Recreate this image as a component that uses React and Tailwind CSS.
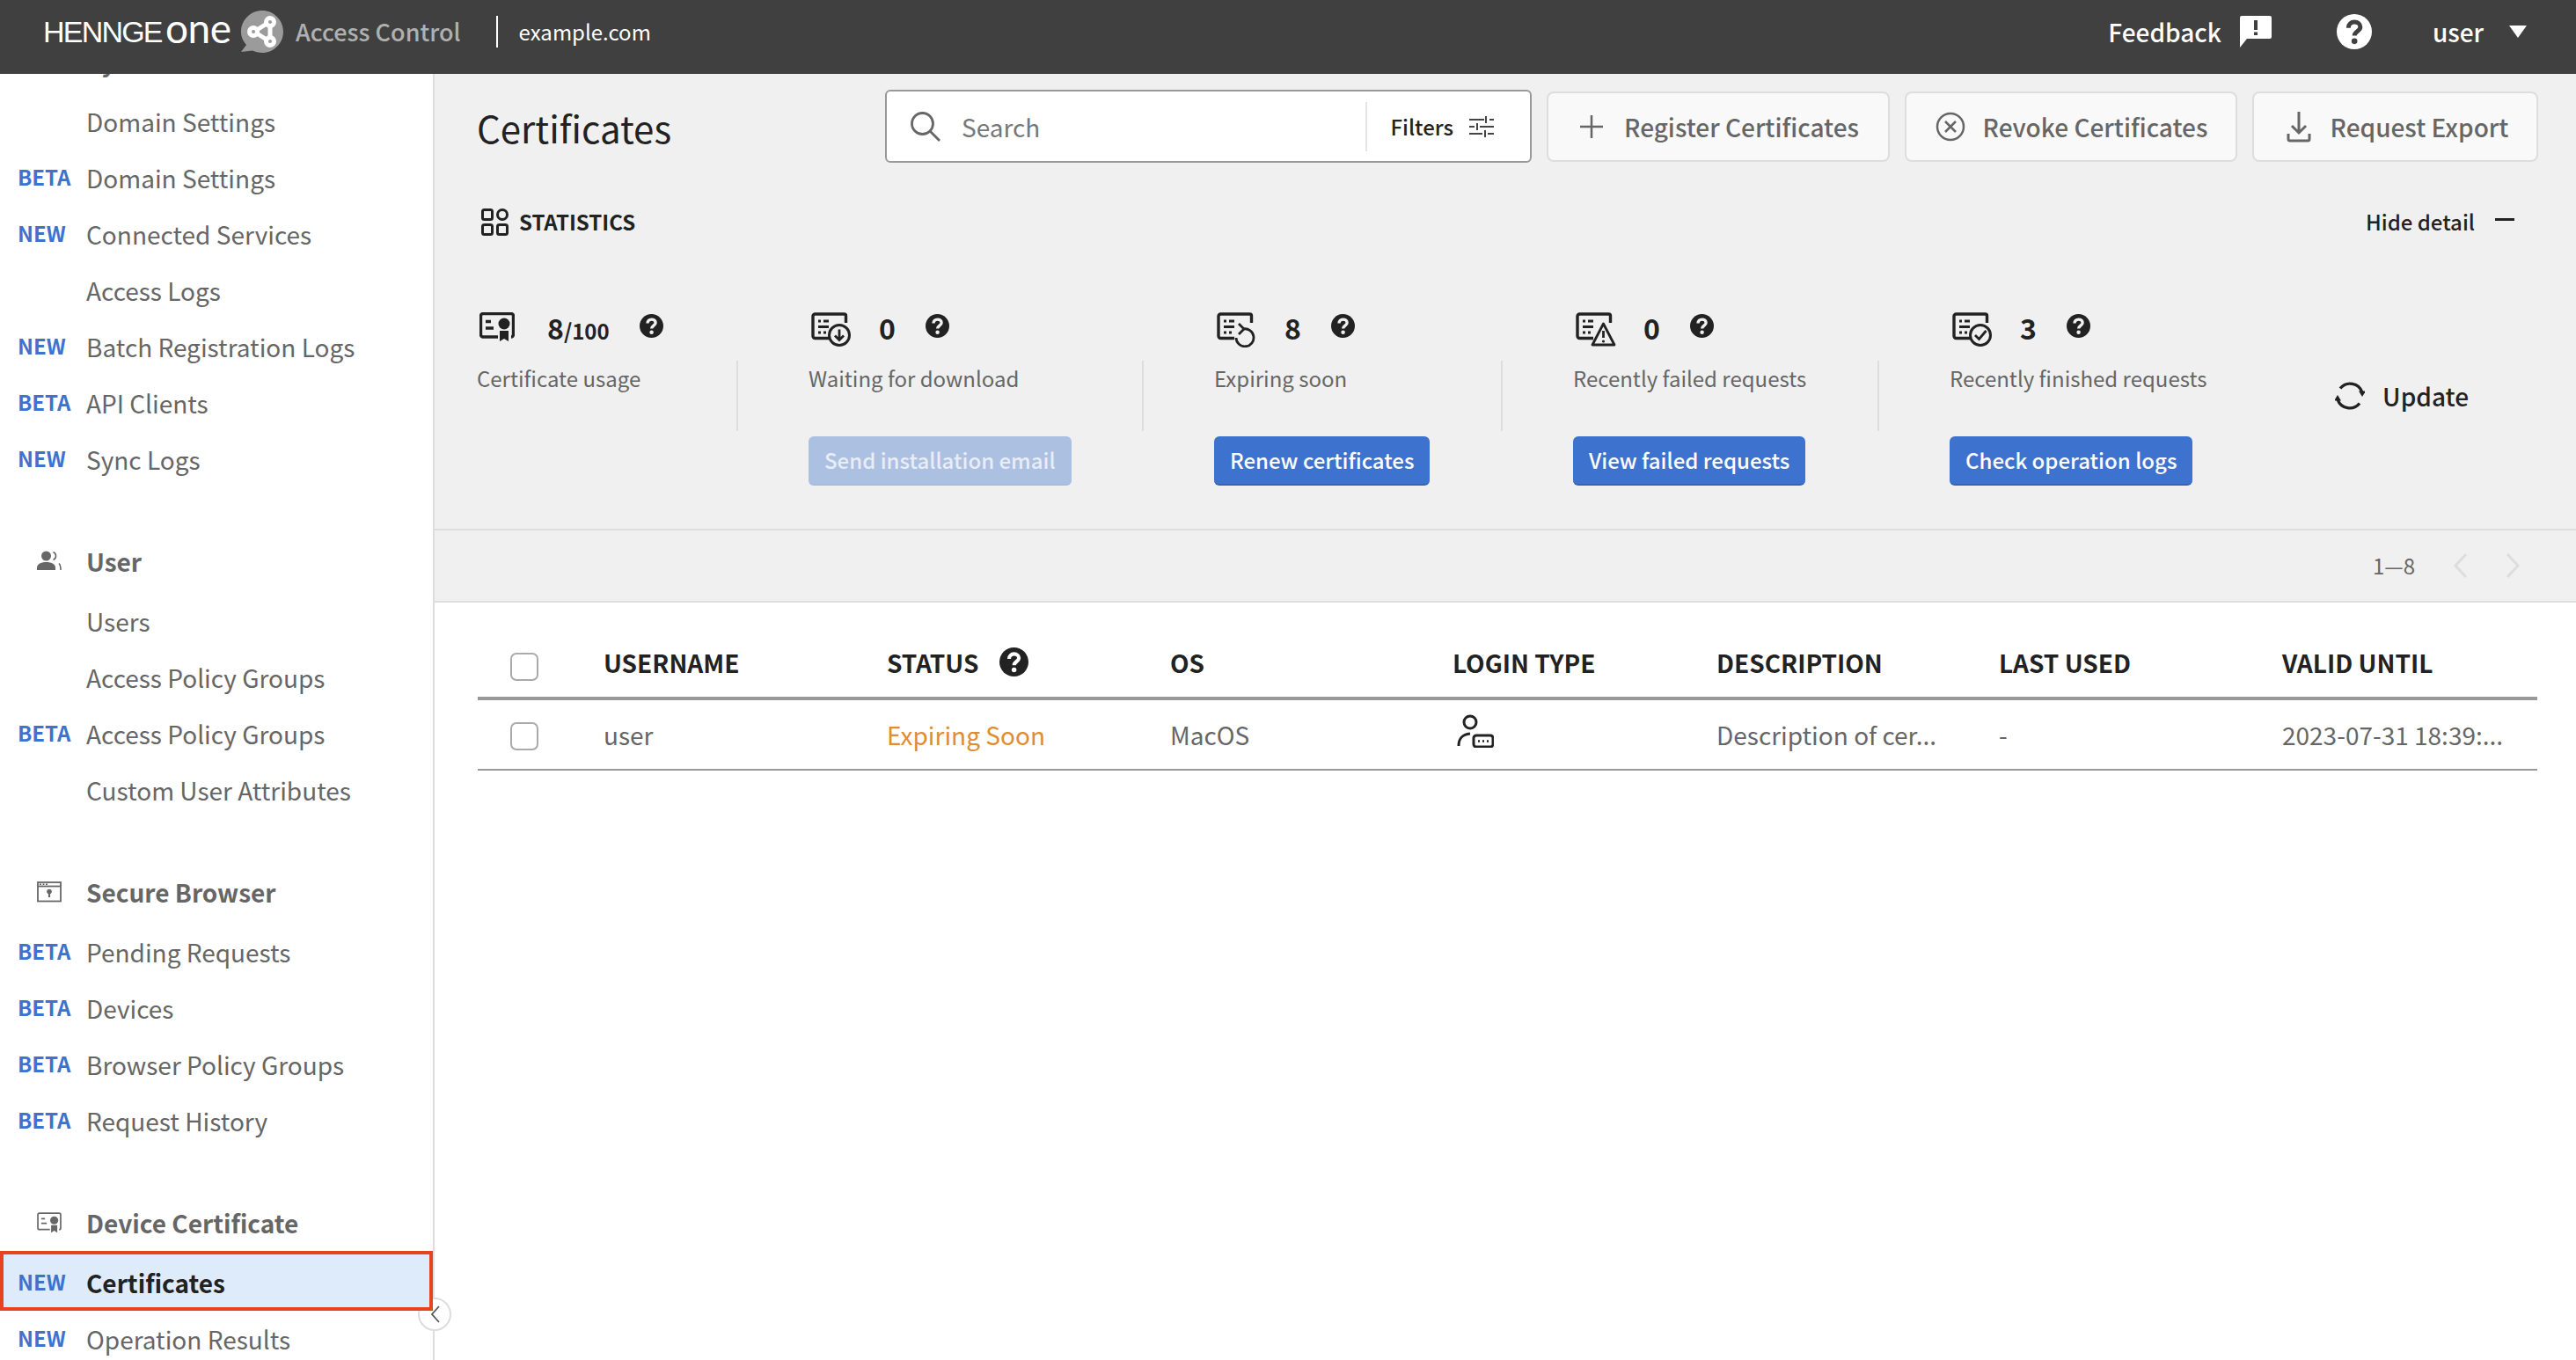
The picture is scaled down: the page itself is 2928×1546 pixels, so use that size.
import React from "react";

const Help = ({ size = 27, color = "#222", q = "#f0f0f0" }) => (
  <svg width={size} height={size} viewBox="0 0 24 24" className="shrink-0">
    <circle cx="12" cy="12" r="12" fill={color} />
    <path d="M8 9.400C8 6.900 9.800 5.400 12.100 5.400c2.300 0 4 1.400 4 3.400 0 2.800-4 2.900-4 5.900" fill="none" stroke={q} strokeWidth="3" />
    <circle cx="12.100" cy="18.500" r="2" fill={q} />
  </svg>
);

const CertBase = ({ children }) => (
  <svg width="46" height="40" viewBox="0 0 46 40" fill="none" stroke="#222" strokeWidth="3.400" className="shrink-0">
    <path d="M20 29.500H4.500A2.500 2.500 0 0 1 2 27V4.500A2.500 2.500 0 0 1 4.500 2h33A2 2 0 0 1 39.500 4v8" />
    <path d="M8 10h3M14 10h6M8 16.500h12M8 23h3M14 23h3" strokeWidth="3" />
    {children}
  </svg>
);

const CertDown = () => (
  <CertBase>
    <circle cx="32" cy="26" r="11.500" fill="#f0f0f0" strokeWidth="3" />
    <path d="M32 19.500v12M27 26.500l5 5 5-5" strokeWidth="2.800" />
  </CertBase>
);
const CertRenew = () => (
  <CertBase>
    <path d="M24 16h16v22H24z" fill="#f0f0f0" stroke="none" />
    <path d="M30 19a10 10 0 1 1-8 10" strokeWidth="2.800" />
    <path d="M25 13l6 6-6 6" strokeWidth="2.800" />
  </CertBase>
);
const CertWarn = () => (
  <CertBase>
    <path d="M31.500 13 44 37H19z" fill="#f0f0f0" strokeWidth="2.800" strokeLinejoin="round" />
    <path d="M31.500 21v8" strokeWidth="2.800" />
    <circle cx="31.500" cy="33" r="1.600" fill="#222" stroke="none" />
  </CertBase>
);
const CertCheck = () => (
  <CertBase>
    <circle cx="32" cy="26" r="11.500" fill="#f0f0f0" strokeWidth="3" />
    <path d="M26 26l4.500 4.500L38.500 21" strokeWidth="2.800" />
  </CertBase>
);
const CertBadge = ({ color = "#222", w = 40, h = 34, sw = 3.400 }) => (
  <svg width={w} height={h} viewBox="0 0 40 34" fill="none" stroke={color} strokeWidth={sw} className="shrink-0">
    <path d="M21 28H4a2.500 2.500 0 0 1-2.500-2.500V4A2.500 2.500 0 0 1 4 1.500h32A2.500 2.500 0 0 1 38.500 4v21.500A2.500 2.500 0 0 1 36 28" />
    <path d="M7 10.500h6M7 18h9" />
    <circle cx="28" cy="13" r="6.500" fill={color} stroke="none" />
    <path d="M23 21h10v12l-5-3-5 3z" fill={color} stroke="none" />
  </svg>
);

const badgeClass = "pl-[20px] shrink-0 text-[24px] leading-[32px] font-bold text-[#3d72ce] -translate-y-[1px]";

const NavItem = ({ label, tag }) => (
  <div className="h-[64px] flex items-center">
    {tag ? <span className={`w-[98px] ${badgeClass}`}>{tag}</span> : <span className="w-[98px] shrink-0" />}
    <span className="text-[28px] leading-[40px] text-[#666]">{label}</span>
  </div>
);

const ActiveNavItem = ({ label, tag }) => (
  <div className="relative z-20 h-[68px] -mt-[4px] pt-[4px] flex items-center bg-[#deebfb] border-[4px] border-[#e8431f]">
    <span className={`w-[94px] -ml-[4px] mr-[4px] ${badgeClass}`}>{tag}</span>
    <span className="text-[28px] leading-[40px] font-bold text-[#222]">{label}</span>
  </div>
);

const NavHead = ({ icon, label, first }) => (
  <div className={`h-[72px] flex items-center ${first ? "" : "mt-[48px]"}`}>
    <span className="w-[98px] pl-[42px] shrink-0 flex items-center">{icon}</span>
    <span className="text-[28px] leading-[40px] font-bold text-[#666]">{label}</span>
  </div>
);

const UserIcon = () => (
  <svg width="28" height="24" viewBox="0 0 28 24" fill="none" className="shrink-0">
    <circle cx="10.500" cy="6" r="5.500" fill="#666" />
    <path d="M0 22v-2.500c0-4 4-6.500 10.500-6.500S21 15.500 21 19.500V22z" fill="#666" />
    <path d="M18.500 1.500c2.200 1 3 3 3 4.500s-.8 3.500-3 4.500M25 14.500c1.500 1.500 2 4 2 7.500" stroke="#666" strokeWidth="1.600" />
  </svg>
);
const BrowserIcon = () => (
  <svg width="28" height="24" viewBox="0 0 28 24" fill="none" className="shrink-0">
    <rect x="1" y="1" width="26" height="21.500" fill="#fff" stroke="#666" strokeWidth="1.800" />
    <path d="M1 5.500h26" stroke="#666" strokeWidth="1.800" />
    <path d="M3 3.200h2M6.500 3.200h2M10 3.200h2" stroke="#666" strokeWidth="1.500" />
    <circle cx="14" cy="11.500" r="2.800" fill="#666" />
    <path d="M14 12v6" stroke="#666" strokeWidth="2.200" />
  </svg>
);

const OutlineButton = ({ icon, label, width, gap }) => (
  <button className={`${width} ${gap} h-[80px] shrink-0 bg-[#f9f9f9] border-2 border-[#ddd] rounded-[8px] flex items-center justify-center text-[28px] leading-[40px] text-[#666] font-medium`}>
    {icon}
    <span>{label}</span>
  </button>
);

const StatCol = ({ width, first, icon, value, sub, label, action, disabled, divider = true }) => (
  <div className={`${width} shrink-0 flex flex-col`}>
    <div className={`h-[54px] flex items-start ${first ? "" : "pl-[80px]"}`}>
      <span className="w-[80px] pl-[3px] shrink-0 -translate-y-[1px]">{icon}</span>
      <span className="text-[32px] leading-[40px] font-bold text-[#222] mr-[34px] -translate-y-[4px]">
        {value}
        {sub && <span className="text-[24px] font-bold">{sub}</span>}
      </span>
      <span className="mt-[1px]"><Help /></span>
    </div>
    <div className={`h-[80px] ${first ? "" : "pl-[80px]"} ${divider ? "border-r-2 border-[#ddd]" : ""}`}>
      <p className="text-[24px] leading-[40px] text-[#666] whitespace-nowrap">{label}</p>
    </div>
    {action && (
      <div className={`mt-[6px] ${first ? "" : "pl-[80px]"}`}>
        <button className={`h-[56px] px-[18px] rounded-[6px] text-[24px] leading-[34px] font-medium border-b-2 whitespace-nowrap ${disabled ? "bg-[#acc0e2] border-[#a5bbdf] text-[#e8edf6]" : "bg-[#3d72ce] border-[#3663b4] text-white"}`}>{action}</button>
      </div>
    )}
  </div>
);

const cols = ["USERNAME", "STATUS", "OS", "LOGIN TYPE", "DESCRIPTION", "LAST USED", "VALID UNTIL"];
const gridCols = "grid grid-cols-[143px_322px_322px_321px_300px_321px_322px_1fr]";

const Checkbox = () => <span className="block w-[32px] h-[32px] ml-[37px] mt-[4px] rounded-[7px] border-2 border-[#aaa] bg-white" />;

export default function App() {
  return (
    <div className="h-screen w-full overflow-hidden flex flex-col bg-white font-['Noto_Sans_CJK_JP','Noto_Sans',sans-serif]">
      {/* Header */}
      <header className="h-[84px] shrink-0 bg-[#404040] flex items-center pl-[49px] pr-[56px] pb-[12px] text-white">
        <span className="font-['Liberation_Sans',sans-serif] text-[34px] leading-[40px] tracking-[-1.800px] w-[139px] whitespace-nowrap">HENNGE</span>
        <span className="font-['Lato',sans-serif] text-[46px] leading-[40px] tracking-[-0.500px] w-[86px] -translate-y-[4px]">one</span>
        <svg width="48" height="48" viewBox="0 0 48 48" className="shrink-0">
          <path d="M24 0C37 0 48 10.500 48 24S37 48 24 48c-4 0-8-1-11-2.500L0 47l6-8C2 34 0 30 0 24 0 10.500 11 0 24 0z" fill="#9b9b9b" />
          <g fill="none" stroke="#fff" strokeWidth="5">
            <circle cx="33" cy="13" r="4.500" />
            <circle cx="14" cy="24" r="4.500" />
            <circle cx="33" cy="35" r="4.500" />
            <path d="M18 22l11-7M18 26l11 7M33 18v12" />
          </g>
        </svg>
        <span className="ml-[14px] text-[27px] leading-[36px] font-medium text-[#b0b0b0] whitespace-nowrap">Access Control</span>
        <span className="ml-[40px] w-[2px] h-[36px] bg-white" />
        <span className="ml-[24px] text-[24px] leading-[36px] whitespace-nowrap">example.com</span>
        <span className="ml-auto text-[28px] leading-[40px] font-medium">Feedback</span>
        <svg width="36" height="36" viewBox="0 0 36 36" className="ml-[21px] shrink-0">
          <path d="M2 0h32a2 2 0 0 1 2 2v22a2 2 0 0 1-2 2H8l-8 10V2a2 2 0 0 1 2-2z" fill="#fff" />
          <path d="M16 5h4v11h-4zM16 18.500h4V22h-4z" fill="#404040" />
        </svg>
        <span className="ml-[74px]"><Help size={40} color="#fff" q="#404040" /></span>
        <span className="ml-[69px] text-[28px] leading-[40px] font-medium">user</span>
        <svg width="20" height="14" viewBox="0 0 20 14" className="ml-[29px]">
          <path d="M0 0h20L10 14z" fill="#fff" />
        </svg>
      </header>

      <div className="relative flex-1 flex min-h-0">
        {/* Sidebar */}
        <aside className="w-[494px] shrink-0 border-r-2 border-[#ddd] overflow-hidden bg-white">
          <nav className="-mt-[50px]">
            <NavHead first label="System" />
            <NavItem label="Domain Settings" />
            <NavItem tag="BETA" label="Domain Settings" />
            <NavItem tag="NEW" label="Connected Services" />
            <NavItem label="Access Logs" />
            <NavItem tag="NEW" label="Batch Registration Logs" />
            <NavItem tag="BETA" label="API Clients" />
            <NavItem tag="NEW" label="Sync Logs" />
            <NavHead icon={<UserIcon />} label="User" />
            <NavItem label="Users" />
            <NavItem label="Access Policy Groups" />
            <NavItem tag="BETA" label="Access Policy Groups" />
            <NavItem label="Custom User Attributes" />
            <NavHead icon={<BrowserIcon />} label="Secure Browser" />
            <NavItem tag="BETA" label="Pending Requests" />
            <NavItem tag="BETA" label="Devices" />
            <NavItem tag="BETA" label="Browser Policy Groups" />
            <NavItem tag="BETA" label="Request History" />
            <NavHead icon={<CertBadge color="#666" w={28} h={24} sw={2.400} />} label="Device Certificate" />
            <ActiveNavItem tag="NEW" label="Certificates" />
            <NavItem tag="NEW" label="Operation Results" />
          </nav>
        </aside>

        {/* Collapse handle */}
        <button className="absolute left-[475px] top-[1391px] w-[38px] h-[38px] rounded-full bg-white border-2 border-[#ddd] flex items-center justify-center z-10">
          <svg width="11" height="20" viewBox="0 0 11 20" fill="none" stroke="#555" strokeWidth="1.800"><path d="M10 1 2 10l8 9" /></svg>
        </button>

        {/* Main */}
        <main className="flex-1 min-w-0 flex flex-col">
          <section className="h-[519px] shrink-0 bg-[#f0f0f0] border-b-2 border-[#ddd] pl-[48px] pr-[43px] pt-[18px]">
            {/* Toolbar */}
            <div className="flex items-center h-[83px]">
              <h1 className="text-[42px] leading-[60px] font-normal text-[#222] mt-[2px]">Certificates</h1>
              <div className="ml-auto w-[735px] h-[83px] bg-white border-2 border-[#999] rounded-[6px] flex items-center shrink-0 mr-[17px]">
                <svg width="36" height="36" viewBox="0 0 36 36" fill="none" stroke="#666" strokeWidth="2.800" className="ml-[26px] shrink-0">
                  <circle cx="14.500" cy="14.500" r="12" />
                  <path d="M23 23l11 11" />
                </svg>
                <span className="ml-[23px] text-[28px] leading-[40px] text-[#777]">Search</span>
                <span className="ml-auto w-[2px] h-[56px] bg-[#e5e5e5]" />
                <span className="ml-[26px] text-[24px] leading-[34px] font-medium text-[#222]">Filters</span>
                <svg width="28" height="24" viewBox="0 0 28 24" fill="none" stroke="#444" strokeWidth="2" className="ml-[18px] mr-[41px] shrink-0">
                  <path d="M0 4h17M23 4h5M0 12h6M12 12h16M0 20h15M21 20h7M19 0v8M9 8v8M18 16v8" />
                </svg>
              </div>
              <div className="flex items-center gap-[17px]">
                <OutlineButton
                  width="w-[390px] pl-[3px]"
                  gap="gap-[24px]"
                  label="Register Certificates"
                  icon={<svg width="26" height="26" viewBox="0 0 26 26" fill="none" stroke="#666" strokeWidth="2.500"><path d="M13 0v26M0 13h26" /></svg>}
                />
                <OutlineButton
                  width="w-[378px] pl-[1px]"
                  gap="gap-[20px]"
                  label="Revoke Certificates"
                  icon={<svg width="34" height="34" viewBox="0 0 34 34" fill="none" stroke="#666" strokeWidth="2.500"><circle cx="17" cy="17" r="15" /><path d="M11 11l12 12M23 11 11 23" /></svg>}
                />
                <OutlineButton
                  width="w-[325px] pl-[5px]"
                  gap="gap-[22px]"
                  label="Request Export"
                  icon={<svg width="28" height="36" viewBox="0 0 28 36" fill="none" stroke="#666" strokeWidth="3"><path d="M14 1v24M6 17l8 8 8-8M2 26v6a2 2 0 0 0 2 2h20a2 2 0 0 0 2-2v-6" /></svg>}
                />
              </div>
            </div>

            {/* Statistics heading */}
            <div className="mt-[52px] h-[30px] flex items-center pl-[5px] pr-[27px]">
              <svg width="31" height="31" viewBox="0 0 31 31" fill="none" stroke="#222" strokeWidth="3" className="shrink-0">
                <rect x="1.500" y="1.500" width="11" height="11" rx="2" />
                <circle cx="24" cy="7" r="5.500" />
                <rect x="1.500" y="18.500" width="11" height="11" rx="2" />
                <rect x="18.500" y="18.500" width="11" height="11" rx="2" />
              </svg>
              <span className="ml-[12px] text-[24px] leading-[34px] font-bold text-[#222]">STATISTICS</span>
              <span className="ml-auto text-[24px] leading-[34px] font-medium text-[#222]">Hide detail</span>
              <span className="ml-[23px] w-[22px] h-[3px] bg-[#222] -translate-y-[3px]" />
            </div>

            {/* Stats */}
            <div className="mt-[89px] flex">
              <StatCol first width="w-[297px]" icon={<CertBadge />} value="8" sub="/100" label="Certificate usage" />
              <StatCol width="w-[461px]" icon={<CertDown />} value="0" label="Waiting for download" action="Send installation email" disabled />
              <StatCol width="w-[408px]" icon={<CertRenew />} value="8" label="Expiring soon" action="Renew certificates" />
              <StatCol width="w-[428px]" icon={<CertWarn />} value="0" label="Recently failed requests" action="View failed requests" />
              <StatCol width="w-[400px]" icon={<CertCheck />} value="3" label="Recently finished requests" action="Check operation logs" divider={false} />
              <div className="ml-auto mr-[79px] self-start mt-[76px] h-[36px] flex items-center gap-[20px]">
                <svg width="34" height="34" viewBox="0 0 34 34" fill="none" stroke="#222" strokeWidth="3.400" className="shrink-0">
                  <path d="M6 8.500A14.500 14.500 0 0 1 31 13M28 25.500A14.500 14.500 0 0 1 3 21" />
                  <path d="M27 11.500h8l-4 6.500z" fill="#222" stroke="none" />
                  <path d="M-1 22.500h8l-4-6.500z" fill="#222" stroke="none" />
                </svg>
                <span className="text-[28px] leading-[40px] font-medium text-[#222]">Update</span>
              </div>
            </div>
          </section>

          {/* Pagination */}
          <div className="h-[82px] shrink-0 bg-[#f0f0f0] border-b-2 border-[#ddd] flex items-center justify-end pr-[63px]">
            <span className="text-[24px] leading-[34px] text-[#666] mr-[43px]">1—8</span>
            <svg width="17" height="28" viewBox="0 0 17 28" fill="none" stroke="#ddd" strokeWidth="3"><path d="M15 1 3 14l12 13" /></svg>
            <svg width="17" height="28" viewBox="0 0 17 28" fill="none" stroke="#ddd" strokeWidth="3" className="ml-[43px]"><path d="M2 1l12 13L2 27" /></svg>
          </div>

          {/* Table */}
          <div className="flex-1 bg-white pl-[49px] pr-[44px] pt-[34px]">
            <div className={`${gridCols} h-[77px] items-center border-b-4 border-[#999]`}>
              <Checkbox />
              {cols.map((c) => (
                <div key={c} className="flex items-center gap-[24px] text-[28px] leading-[40px] font-bold text-[#222] whitespace-nowrap -translate-y-[3px]">
                  {c}
                  {c === "STATUS" && <Help size={33} color="#222" q="#fff" />}
                </div>
              ))}
            </div>
            <div className={`${gridCols} h-[80px] items-center border-b-2 border-[#999] text-[28px] leading-[40px] text-[#666]`}>
              <Checkbox />
              <div>user</div>
              <div className="text-[#e08c2f]">Expiring Soon</div>
              <div>MacOS</div>
              <div className="pl-[5px] -translate-y-[4px]">
                <svg width="42" height="38" viewBox="0 0 42 38" fill="none" stroke="#222" strokeWidth="3">
                  <circle cx="15" cy="9" r="7" />
                  <path d="M2 36c0-9 4-13 13-14" />
                  <rect x="19" y="24" width="22" height="13" rx="3" />
                  <path d="M24 30.500h2M29 30.500h2M34 30.500h2" strokeWidth="2.500" />
                </svg>
              </div>
              <div>Description of cer...</div>
              <div>-</div>
              <div className="whitespace-nowrap">2023-07-31 18:39:...</div>
            </div>
          </div>
        </main>
      </div>
    </div>
  );
}
